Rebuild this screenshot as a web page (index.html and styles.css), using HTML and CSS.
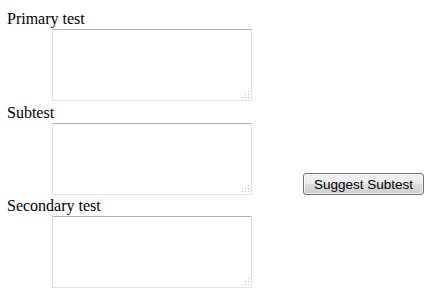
FILE: index.html
```html
<!DOCTYPE html>
<html>
<head>
<meta charset="utf-8">
<link rel="stylesheet" href="styles.css">
</head>
<body>
<div class="form">
  <div class="section">
    <div class="label">Primary test</div>
    <div class="row">
      <div class="ta-wrap"><textarea class="ta"></textarea><span class="grip"></span></div>
    </div>
  </div>
  <div class="section section-mid">
    <div class="label">Subtest</div>
    <div class="row">
      <div class="ta-wrap"><textarea class="ta"></textarea><span class="grip"></span></div>
      <button class="btn" type="button">Suggest Subtest</button>
    </div>
  </div>
  <div class="section section-last">
    <div class="label">Secondary test</div>
    <div class="row">
      <div class="ta-wrap"><textarea class="ta"></textarea><span class="grip"></span></div>
    </div>
  </div>
</div>
</body>
</html>
```
FILE: styles.css
```css
html, body {
  margin: 0;
  padding: 0;
  background: #ffffff;
}
body {
  padding: 10px 0 0 7px;
  font-family: "Liberation Serif", "Times New Roman", serif;
  font-size: 16px;
  color: #000;
}
.section {
  display: flex;
  flex-direction: column;
  margin-bottom: 3px;
}
.section-mid {
  margin-bottom: 2px;
}
.section-last {
  margin-bottom: 0;
}
.label {
  height: 18px;
  line-height: 18px;
  white-space: nowrap;
}
.row {
  display: flex;
  align-items: flex-end;
  margin-top: 1px;
  padding-left: 45px;
}
.ta-wrap {
  position: relative;
  width: 200px;
  height: 72px;
}
.ta {
  display: block;
  box-sizing: border-box;
  width: 200px;
  height: 72px;
  margin: 0;
  padding: 2px;
  resize: none;
  border: 1px solid #e2e3ea;
  border-top-color: #abadb3;
  border-radius: 0;
  background: #fff;
  outline: none;
}
.grip {
  position: absolute;
  right: 3px;
  bottom: 3px;
  width: 8px;
  height: 8px;
  background-image:
    radial-gradient(circle, #b8b8b8 0.8px, transparent 1px);
  background-size: 3px 3px;
  background-position: 0 0;
  clip-path: polygon(100% 0, 100% 100%, 0 100%);
}
.btn {
  box-sizing: border-box;
  width: 121px;
  height: 22px;
  margin: 0 0 0 51px;
  padding: 0;
  font-family: "Liberation Sans", Arial, sans-serif;
  font-size: 13.5px;
  color: #000;
  border: 1px solid #707070;
  border-radius: 3px;
  background: linear-gradient(to bottom, #f2f2f2 0%, #ebebeb 50%, #dddddd 51%, #cfcfcf 100%);
  box-shadow: inset 0 0 0 1px rgba(255,255,255,0.7);
}
```
